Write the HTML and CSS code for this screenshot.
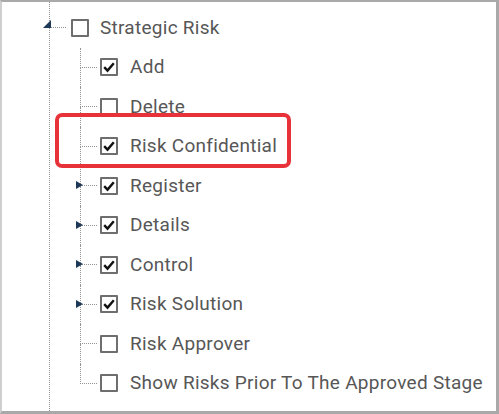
FILE: index.html
```html
<!DOCTYPE html>
<html>
<head>
<meta charset="utf-8">
<link rel="stylesheet" href="styles.css">
</head>
<body>
<div class="frame">
  <div class="tree">
    <div class="row root">
      <span class="conn"><span class="tri-open"></span></span>
      <span class="box"></span>
      <span class="label">Strategic Risk</span>
    </div>
    <div class="children">
      <div class="row child"><span class="conn"></span><span class="box on"><svg viewBox="0 0 14 14"><path d="M2.2 7.2 L5.5 10.6 L11.8 3.2" /></svg></span><span class="label">Add</span></div>
      <div class="row child"><span class="conn"></span><span class="box"></span><span class="label">Delete</span></div>
      <div class="row child"><span class="conn"></span><span class="box on"><svg viewBox="0 0 14 14"><path d="M2.2 7.2 L5.5 10.6 L11.8 3.2" /></svg></span><span class="label">Risk Confidential</span></div>
      <div class="row child"><span class="conn"><span class="tri-closed"></span></span><span class="box on"><svg viewBox="0 0 14 14"><path d="M2.2 7.2 L5.5 10.6 L11.8 3.2" /></svg></span><span class="label">Register</span></div>
      <div class="row child"><span class="conn"><span class="tri-closed"></span></span><span class="box on"><svg viewBox="0 0 14 14"><path d="M2.2 7.2 L5.5 10.6 L11.8 3.2" /></svg></span><span class="label">Details</span></div>
      <div class="row child"><span class="conn"><span class="tri-closed"></span></span><span class="box on"><svg viewBox="0 0 14 14"><path d="M2.2 7.2 L5.5 10.6 L11.8 3.2" /></svg></span><span class="label">Control</span></div>
      <div class="row child"><span class="conn"><span class="tri-closed"></span></span><span class="box on"><svg viewBox="0 0 14 14"><path d="M2.2 7.2 L5.5 10.6 L11.8 3.2" /></svg></span><span class="label">Risk Solution</span></div>
      <div class="row child"><span class="conn"></span><span class="box"></span><span class="label">Risk Approver</span></div>
      <div class="row child last"><span class="conn"></span><span class="box"></span><span class="label">Show Risks Prior To The Approved Stage</span></div>
    </div>
  </div>
  <div class="highlight"></div>
</div>
</body>
</html>
```
FILE: styles.css
```css
html, body {
  margin: 0;
  padding: 0;
  background: #ffffff;
}
.frame {
  position: relative;
  box-sizing: border-box;
  width: 499px;
  height: 414px;
  border-top: 2px solid #a9a9a9;
  border-left: 2px solid #cfcfcf;
  border-right: 3px solid #a9a9a9;
  border-bottom: 3px solid #a9a9a9;
  padding-left: 47px;
  font-family: Roboto, "Liberation Sans", sans-serif;
  font-size: 19px;
  letter-spacing: 0.27px;
  color: #575757;
  overflow: hidden;
}
.tree {
  height: 100%;
  box-sizing: border-box;
  padding-top: 6px;
  border-left: 1px dotted #939393;
}
.row {
  display: flex;
  align-items: stretch;
  height: 39.5px;
}
.conn {
  position: relative;
  display: flex;
  flex-direction: column;
  flex: none;
}
.conn::before {
  content: "";
  flex: 1;
  border-bottom: 1px dotted #939393;
}
.conn::after {
  content: "";
  flex: 1;
}
.root .conn {
  width: 16px;
  margin-right: 5px;
}
.children {
  margin-left: 30px;
}
.child .conn {
  width: 17px;
  margin-right: 3px;
}
.child .conn::before {
  border-left: 1px dotted #939393;
}
.child .conn::after {
  border-left: 1px dotted #939393;
}
.child.last .conn::after {
  border-left: none;
}
.box {
  align-self: center;
  box-sizing: border-box;
  width: 18px;
  height: 18px;
  border: 2px solid #6e6e6e;
  border-radius: 1px;
  background: #fff;
  flex: none;
  display: flex;
  align-items: center;
  justify-content: center;
}
.box svg {
  width: 14px;
  height: 14px;
  fill: none;
  stroke: #111;
  stroke-width: 2.4;
}
.root .label {
  margin-left: 11px;
}
.child .label {
  margin-left: 12px;
}
.label {
  align-self: center;
  white-space: nowrap;
  line-height: 22px;
}
.tri-open {
  position: absolute;
  left: -7px;
  top: 12px;
  width: 0;
  height: 0;
  border-left: 8px solid transparent;
  border-bottom: 8px solid #1d3957;
}
.tri-closed {
  position: absolute;
  left: -4px;
  top: 15px;
  width: 0;
  height: 0;
  border-top: 4.5px solid transparent;
  border-bottom: 4.5px solid transparent;
  border-left: 7px solid #1d3957;
}
.highlight {
  position: absolute;
  left: 53px;
  top: 111px;
  width: 236px;
  height: 55px;
  box-sizing: border-box;
  border: 4px solid #e8323a;
  border-radius: 7px;
}
```
